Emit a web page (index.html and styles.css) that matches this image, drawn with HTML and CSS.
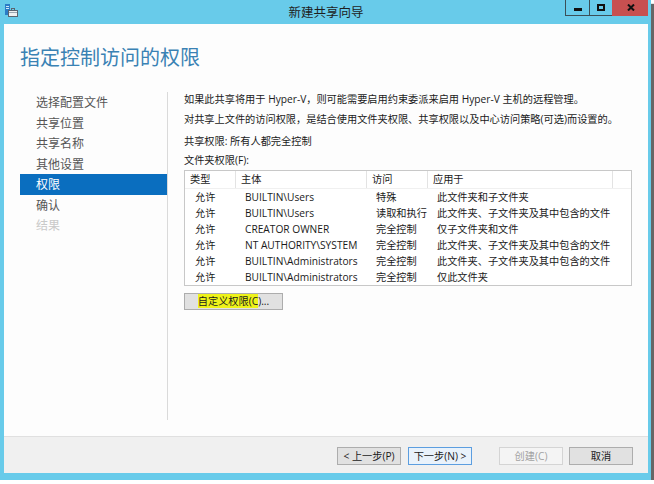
FILE: index.html
```html
<!DOCTYPE html>
<html lang="zh-CN">
<head>
<meta charset="utf-8">
<title>新建共享向导</title>
<link rel="stylesheet" href="styles.css">
</head>
<body>
<div class="window">
  <div class="titlebar">
    <div class="tb-left">
      <svg class="app-icon" width="14" height="14" viewBox="0 0 14 14">
        <rect x="0" y="0" width="5" height="11" fill="#2b7cc6"/>
        <rect x="1" y="2" width="3" height="1" fill="#cfe6f7"/>
        <rect x="1" y="4" width="3" height="1" fill="#cfe6f7"/>
        <rect x="3.5" y="6.5" width="9" height="6" fill="#eef0f2" stroke="#5a6470" stroke-width="1"/>
        <rect x="6.5" y="4.5" width="3" height="2" fill="none" stroke="#5a6470" stroke-width="1"/>
        <rect x="4" y="8" width="8" height="1" fill="#9aa6b2"/>
      </svg>
    </div>
    <div class="title">新建共享向导</div>
    <div class="controls">
      <div class="ctl ctl-min"><span class="g-min"></span></div>
      <div class="ctl ctl-max"><span class="g-max"></span></div>
      <div class="ctl ctl-close"><svg width="8" height="7" viewBox="0 0 8 7"><path d="M1 0.5 L7 6.5 M7 0.5 L1 6.5" stroke="#111" stroke-width="2"/></svg></div>
    </div>
  </div>
  <div class="client">
    <div class="main">
      <h1>指定控制访问的权限</h1>
      <div class="wiz">
        <div class="nav">
          <div class="nav-item">选择配置文件</div>
          <div class="nav-item">共享位置</div>
          <div class="nav-item">共享名称</div>
          <div class="nav-item">其他设置</div>
          <div class="nav-item active">权限</div>
          <div class="nav-item">确认</div>
          <div class="nav-item disabled">结果</div>
        </div>
        <div class="content">
          <p class="p1">如果此共享将用于 Hyper-V，则可能需要启用约束委派来启用 Hyper-V 主机的远程管理。</p>
          <p class="p2">对共享上文件的访问权限，是结合使用文件夹权限、共享权限以及中心访问策略(可选)而设置的。</p>
          <p class="p3">共享权限: 所有人都完全控制</p>
          <p class="p4">文件夹权限(F):</p>
          <div class="list">
            <div class="row head">
              <div class="cell">类型</div>
              <div class="cell">主体</div>
              <div class="cell">访问</div>
              <div class="cell">应用于</div>
              <div class="cell last"></div>
            </div>
            <div class="row">
              <div class="cell">允许</div>
              <div class="cell">BUILTIN\Users</div>
              <div class="cell">特殊</div>
              <div class="cell">此文件夹和子文件夹</div>
            </div>
            <div class="row">
              <div class="cell">允许</div>
              <div class="cell">BUILTIN\Users</div>
              <div class="cell">读取和执行</div>
              <div class="cell">此文件夹、子文件夹及其中包含的文件</div>
            </div>
            <div class="row">
              <div class="cell">允许</div>
              <div class="cell">CREATOR OWNER</div>
              <div class="cell">完全控制</div>
              <div class="cell">仅子文件夹和文件</div>
            </div>
            <div class="row">
              <div class="cell">允许</div>
              <div class="cell">NT AUTHORITY\SYSTEM</div>
              <div class="cell">完全控制</div>
              <div class="cell">此文件夹、子文件夹及其中包含的文件</div>
            </div>
            <div class="row">
              <div class="cell">允许</div>
              <div class="cell">BUILTIN\Administrators</div>
              <div class="cell">完全控制</div>
              <div class="cell">此文件夹、子文件夹及其中包含的文件</div>
            </div>
            <div class="row">
              <div class="cell">允许</div>
              <div class="cell">BUILTIN\Administrators</div>
              <div class="cell">完全控制</div>
              <div class="cell">仅此文件夹</div>
            </div>
          </div>
          <button class="btn btn-custom"><span class="hl">自定义权限(C</span>)...</button>
        </div>
      </div>
    </div>
    <div class="footer">
      <button class="btn fbtn">&lt; 上一步(P)</button>
      <button class="btn fbtn focus">下一步(N) &gt;</button>
      <button class="btn fbtn disabled gap">创建(C)</button>
      <button class="btn fbtn last-btn">取消</button>
    </div>
  </div>
</div>
</body>
</html>
```

FILE: styles.css
```css
* { box-sizing: border-box; margin: 0; padding: 0; }
html, body { margin: 0; background: #ffffff; }
body { font-family: "Noto Sans CJK SC", sans-serif; }

.window {
  width: 651px;
  height: 480px;
  background: #68cbea;
  padding: 0 3px 7px 4px;
  display: flex;
  flex-direction: column;
  box-shadow: 3px 4px 1px rgba(0, 0, 0, 0.6);
}

.titlebar {
  height: 24px;
  display: grid;
  grid-template-columns: 1fr auto 1fr;
  align-items: start;
}
.tb-left { padding: 4px 0 0 1px; }
.app-icon { display: block; }
.title {
  font-size: 12.5px;
  line-height: 24px;
  color: #1e1e1e;
}
.controls {
  justify-self: end;
  display: flex;
  height: 16px;
}
.ctl {
  height: 16px;
  display: flex;
  align-items: center;
  justify-content: center;
  border-left: 1px solid #3b4f57;
  border-bottom: 1px solid #3b4f57;
}
.ctl-min { width: 24px; }
.ctl-max { width: 23px; }
.ctl-close { width: 36px; background: #c75050; border-color: #c75050; }
.g-min { display: block; width: 8px; height: 3px; background: #111; margin-top: 3px; }
.g-max { display: block; width: 8px; height: 7px; border: 2px solid #111; }

.client {
  flex: 1;
  display: flex;
  flex-direction: column;
  background: #fff;
}
.main {
  flex: 1;
  background: #fdfdfd;
  padding: 21px 0 16px 16px;
  display: flex;
  flex-direction: column;
}
h1 {
  font-size: 20px;
  line-height: 24px;
  font-weight: normal;
  color: #3a82b4;
}
.wiz {
  flex: 1;
  display: flex;
  margin-top: 23px;
}
.nav {
  width: 148px;
  border-right: 1px solid #dadada;
}
.nav-item {
  height: 20.5px;
  line-height: 20.5px;
  padding-left: 16px;
  font-size: 12px;
  color: #555555;
}
.nav-item.active { background: #0a6ebf; color: #ffffff; }
.nav-item.disabled { color: #c9c9c9; }

.content {
  flex: 1;
  padding-left: 16px;
  font-family: "Open Sans", "Noto Sans CJK SC", sans-serif;
  font-size: 10.2px;
  color: #1a1a1a;
}
.content p { line-height: 14px; white-space: nowrap; }
.p2 { margin-top: 6px; }
.p3 { margin-top: 8px; }
.p4 { margin-top: 5px; }

.list {
  margin-top: 3px;
  width: 448px;
  border: 1px solid #c8c8c8;
  background: #fff;
}
.row {
  display: grid;
  grid-template-columns: 51px 131px 61px 185px 18px;
  height: 16px;
  line-height: 16px;
}
.row .cell { padding-left: 9px; white-space: nowrap; overflow: hidden; }
.row .cell:first-child { padding-left: 10px; }
.row.head {
  height: 18px;
  line-height: 17px;
  border-bottom: 1px solid #f0f0f0;
}
.row.head .cell { padding-left: 5px; border-right: 1px solid #e3e3e3; }
.row.head .cell.last { border-right: 0; }

.btn {
  font-family: "Open Sans", "Noto Sans CJK SC", sans-serif;
  font-size: 10.2px;
  color: #1a1a1a;
  background: #e1e1e1;
  border: 1px solid #adadad;
  text-align: center;
  display: block;
}
.btn-custom {
  margin-top: 7px;
  width: 99px;
  height: 17px;
  line-height: 15px;
}
.hl { background: #eef31a; }

.footer {
  height: 37px;
  background: #f0f0f0;
  border-top: 1px solid #e0e0e0;
  display: flex;
  justify-content: flex-end;
  align-items: flex-start;
  padding: 10px 15px 0 0;
}
.fbtn {
  width: 64px;
  height: 18px;
  line-height: 16px;
  margin-left: 7px;
}
.fbtn.gap { margin-left: 27px; }
.fbtn.last-btn { margin-left: 6px; }
.fbtn.focus { background: #e9f2fb; border-color: #5c9ee0; }
.fbtn.disabled { background: #f4f4f4; border-color: #d4d4d4; color: #a2a2a2; }
```
